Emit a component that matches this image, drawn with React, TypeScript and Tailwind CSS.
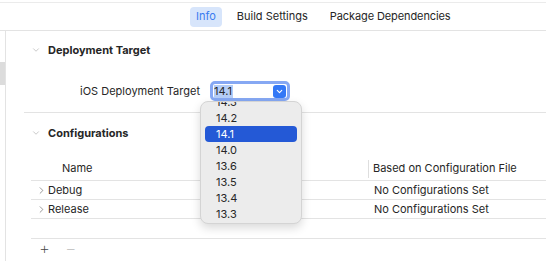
import { ChevronDown, ChevronRight } from 'lucide-react';

const versions = ['14.3', '14.2', '14.1', '14.0', '13.6', '13.5', '13.4', '13.3'];

export default function App() {
  return (
    <div className="relative w-[546px] h-[261px] overflow-hidden bg-white text-[11px] text-[#262626] font-['Inter',sans-serif]">
      {/* tab bar */}
      <div className="mt-[2px] border-t border-[#ebebeb]">
        <div className="flex h-[28px] items-center pl-[190px] border-b border-[#e3e3e3]">
          <div className="flex h-[20px] items-center rounded-[4px] bg-[#d7e5fb] px-[6px] text-[#3a7bf0]">Info</div>
          <div className="ml-[15px]">Build Settings</div>
          <div className="ml-[22px] tracking-[-0.1px]">Package Dependencies</div>
        </div>
      </div>

      <div className="flex h-[230px]">
        {/* left strip */}
        <div className="w-[6px] border-r border-[#e3e3e3] pt-[31px]">
          <div className="h-[23px] w-[5px] bg-[#dcdcdc]" />
        </div>

        <div className="flex-1 flex flex-col">
          {/* Deployment Target */}
          <div className="mt-[10px] flex h-[18px] items-center pl-[25px]">
            <ChevronDown size={10} strokeWidth={1.5} className="text-[#a8a8a8]" />
            <span className="ml-[7px] font-bold">Deployment Target</span>
          </div>
          <div className="mt-[22px] flex h-[20px] items-center">
            <span className="w-[194px] text-right">iOS Deployment Target</span>
            <div className="ml-[10px] flex h-[20px] w-[80px] items-center rounded-[5px] border-[3px] border-[#86a8f3] bg-white pl-[1px] pr-[1px]">
              <span className="bg-[#b4cdf7] pr-[1px] leading-[13px]">14.1</span>
              <div className="ml-auto flex h-[13px] w-[13px] items-center justify-center rounded-[3px] bg-[#3478f6]">
                <ChevronDown size={9} strokeWidth={3} className="text-white" />
              </div>
            </div>
          </div>
          <div className="mt-[11px] ml-[18px] border-t border-[#e3e3e3]" />

          {/* Configurations */}
          <div className="mt-[11px] flex h-[18px] items-center pl-[25px]">
            <ChevronDown size={10} strokeWidth={1.5} className="text-[#a8a8a8]" />
            <span className="ml-[7px] font-bold">Configurations</span>
          </div>
          <div className="ml-[25px] mt-[15px] flex h-[24px] items-center border-b border-[#e3e3e3]">
            <span className="ml-[31px] w-[306px]">Name</span>
            <span className="h-[18px] border-l border-[#dedede]" />
            <span className="ml-[4px]">Based on Configuration File</span>
          </div>
          {['Debug', 'Release'].map((name) => (
            <div key={name} className="ml-[25px] flex h-[19px] items-center border-b border-[#e3e3e3]">
              <ChevronRight size={11} strokeWidth={1.3} className="ml-[5px] text-[#555]" />
              <span className="ml-[1px] w-[326px]">{name}</span>
              <span>No Configurations Set</span>
            </div>
          ))}
          <div className="ml-[25px] mt-[19px] border-t border-[#e3e3e3]" />
          <div className="ml-[25px] flex h-[18px] items-center">
            <span className="ml-[8px] text-[17px] font-extralight leading-none text-[#444]">+</span>
            <span className="ml-[17px] text-[15px] font-extralight leading-none text-[#b0b0b0]">–</span>
          </div>
        </div>
      </div>

      {/* popup menu */}
      <div className="absolute left-[200px] top-[101px] h-[123px] w-[102px] overflow-hidden rounded-[8px] border border-[#d4d4d4] bg-[#ececec] shadow-[0_4px_10px_rgba(0,0,0,0.15)]">
        <div className="-mt-[8px] px-[4px]">
          {versions.map((v) => (
            <div
              key={v}
              className={`flex h-[16px] items-center rounded-[4px] pl-[11px] ${v === '14.1' ? 'bg-[#2459d6] text-white' : 'text-[#262626]'}`}
            >
              {v}
            </div>
          ))}
        </div>
      </div>
    </div>
  );
}
